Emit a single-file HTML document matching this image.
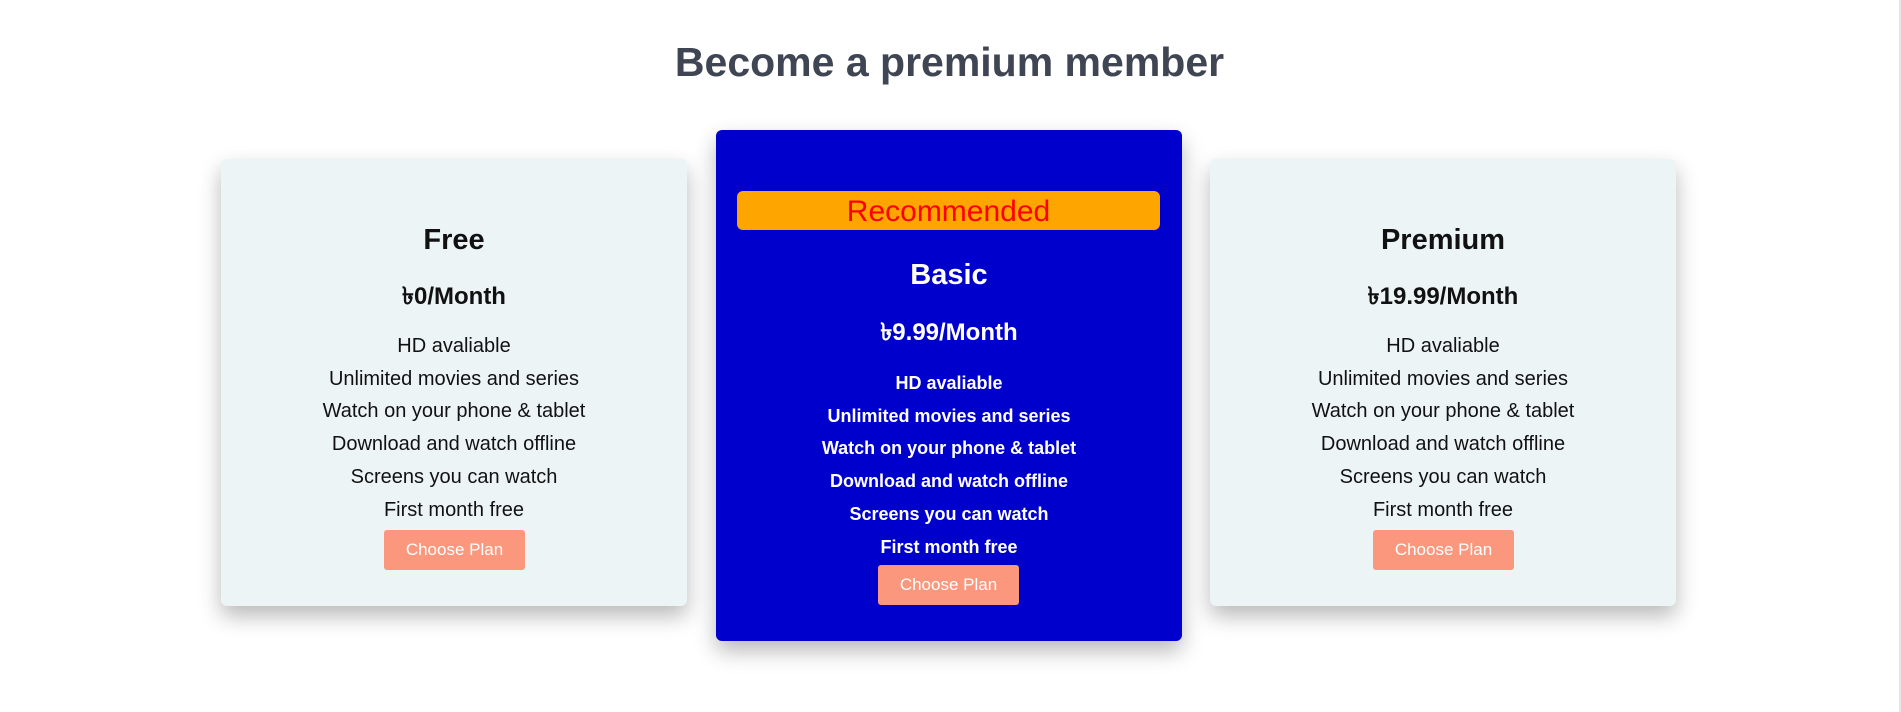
<!DOCTYPE html>
<html><head><meta charset="utf-8"><style>
html,body{margin:0;padding:0;background:#fff;width:1901px;height:712px;overflow:hidden;font-family:"Liberation Sans","DejaVu Sans",sans-serif;}
.h{position:absolute;left:0;width:1899px;top:38px;text-align:center;font-size:41px;font-weight:bold;color:#3f4552;line-height:48px;}
.card{position:absolute;width:466px;border-radius:6px;box-shadow:0 10px 22px rgba(0,0,0,.28);}
.t{position:absolute;left:0;right:0;text-align:center;white-space:nowrap;}
.f{font-size:20px;line-height:23px;}
.b .f{font-size:18px;font-weight:bold;}
.btn{position:absolute;width:141px;height:40px;background:#fa977c;border-radius:3px;color:#fff;font-family:"Liberation Sans",Arial,sans-serif;font-size:17px;line-height:40px;text-align:center;}
.sb{position:absolute;right:0;top:0;width:2px;height:712px;background:#e6e6e6;}
</style></head><body>
<div class="h">Become a premium member</div>

<div class="card" style="left:221px;top:159px;height:447px;background:#edf4f5;color:#111;">
<div class="t" style="top:65px;font-size:29px;font-weight:bold;line-height:33px;">Free</div>
<div class="t" style="top:124px;font-size:24px;font-weight:bold;line-height:27px;">৳0/Month</div>
<div class="t f" style="top:176px;">HD avaliable</div>
<div class="t f" style="top:208.7px;">Unlimited movies and series</div>
<div class="t f" style="top:241.4px;">Watch on your phone &amp; tablet</div>
<div class="t f" style="top:274.1px;">Download and watch offline</div>
<div class="t f" style="top:306.8px;">Screens you can watch</div>
<div class="t f" style="top:339.5px;">First month free</div>
<div class="btn" style="left:163px;top:371px;">Choose Plan</div>
</div>

<div class="card b" style="left:716px;top:130px;height:511px;background:#0000cc;color:#fff;">
<div style="position:absolute;left:21px;top:61px;width:423px;height:39px;background:#ffa500;border-radius:6px;color:#f00;font-size:30px;line-height:41px;text-align:center;">Recommended</div>
<div class="t" style="top:129px;font-size:29px;font-weight:bold;line-height:33px;">Basic</div>
<div class="t" style="top:189px;font-size:24px;font-weight:bold;line-height:27px;">৳9.99/Month</div>
<div class="t f" style="top:242px;">HD avaliable</div>
<div class="t f" style="top:274.7px;">Unlimited movies and series</div>
<div class="t f" style="top:307.4px;">Watch on your phone &amp; tablet</div>
<div class="t f" style="top:340.1px;">Download and watch offline</div>
<div class="t f" style="top:372.8px;">Screens you can watch</div>
<div class="t f" style="top:405.5px;">First month free</div>
<div class="btn" style="left:162px;top:435px;">Choose Plan</div>
</div>

<div class="card" style="left:1210px;top:159px;height:447px;background:#edf4f5;color:#111;">
<div class="t" style="top:65px;font-size:29px;font-weight:bold;line-height:33px;">Premium</div>
<div class="t" style="top:124px;font-size:24px;font-weight:bold;line-height:27px;">৳19.99/Month</div>
<div class="t f" style="top:176px;">HD avaliable</div>
<div class="t f" style="top:208.7px;">Unlimited movies and series</div>
<div class="t f" style="top:241.4px;">Watch on your phone &amp; tablet</div>
<div class="t f" style="top:274.1px;">Download and watch offline</div>
<div class="t f" style="top:306.8px;">Screens you can watch</div>
<div class="t f" style="top:339.5px;">First month free</div>
<div class="btn" style="left:163px;top:371px;">Choose Plan</div>
</div>
<div class="sb"></div>
</body></html>
